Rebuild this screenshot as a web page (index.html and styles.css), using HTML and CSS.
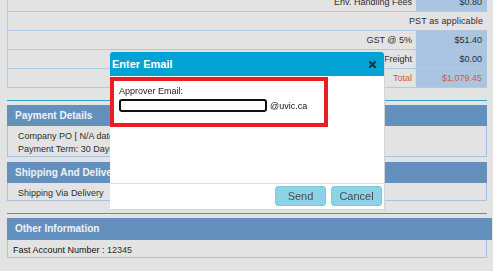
FILE: index.html
```html
<html>

<head>
    <meta charset="UTF-8">
    <meta name="viewport" content="width=device-width, initial-scale=1.0">
    <link rel="stylesheet" href="styles.css">
</head>

<body>
    <div class="page">
        <div class="totals">
            <div class="row"><div class="label">Env. Handling Fees</div><div class="value">$0.80</div></div>
            <div class="row"><div class="note">PST as applicable</div></div>
            <div class="row"><div class="label">GST @ 5%</div><div class="value">$51.40</div></div>
            <div class="row"><div class="label">Freight</div><div class="value">$0.00</div></div>
            <div class="row total"><div class="label">Total</div><div class="value">$1,079.45</div></div>
        </div>

        <div class="rule"></div>
        <div class="section">
            <h3>Payment Details</h3>
            <div class="section-body">
                <p>Company PO [ N/A dated N/A ]</p>
                <p>Payment Term: 30 Day(s)</p>
            </div>
        </div>
        <div class="section">
            <h3>Shipping And Delivery</h3>
            <div class="section-body">
                <p>Shipping Via Delivery</p>
            </div>
        </div>

        <div class="rule"></div>
        <div class="section">
            <h3 class="wide">Other Information</h3>
            <div class="section-body tight">
                <p><span class="key">Fast Account Number :</span> 12345</p>
            </div>
        </div>
    </div>

    <div class="modal">
        <div class="modal-head">
            <span class="modal-title">Enter Email</span>
            <svg class="close" width="7" height="7" viewBox="0 0 7 7">
                <path d="M1 1 L6 6 M6 1 L1 6" stroke="#2b2b2b" stroke-width="2" stroke-linecap="round"/>
            </svg>
        </div>
        <div class="modal-body">
            <div class="highlight">
                <div class="field-label">Approver Email:</div>
                <div class="field-row">
                    <input type="text" class="email-input" value="">
                    <span class="domain">@uvic.ca</span>
                </div>
            </div>
        </div>
        <div class="modal-foot">
            <button class="btn">Send</button>
            <button class="btn">Cancel</button>
        </div>
    </div>
</body>

</html>
```

FILE: styles.css
```css
* {
    box-sizing: border-box;
}
body {
    margin: 0;
    background: #e3e3e3;
    font-family: "Liberation Sans", Arial, sans-serif;
    font-size: 9px;
    color: #2e2e2e;
    overflow: hidden;
}
.page {
    margin: -7px 6px 0 7px;
}

/* totals table */
.totals {
    border-left: 1px solid #b3c9e3;
}
.row {
    display: flex;
    height: 19px;
    line-height: 18px;
    border-bottom: 1px solid #b3c9e3;
}
.label {
    flex: 1;
    text-align: right;
    padding-right: 3px;
}
.value {
    width: 72px;
    text-align: right;
    padding-right: 5px;
    background: #a9c5e2;
    border-left: 1px solid #d3dfec;
}
.note {
    flex: 1;
    text-align: right;
    padding-right: 4px;
    letter-spacing: 0.1px;
}
.total .label, .total .value {
    color: #d8593a;
}

/* sections */
.rule {
    height: 1px;
    margin-top: 12px;
    background: #2fa3cf;
}
.section {
    margin-top: 4px;
}
.section + .section {
    margin-top: 5px;
}
.section h3 {
    margin: 0;
    height: 21px;
    line-height: 21px;
    padding-left: 8px;
    background: #6490be;
    color: #eef2f7;
    font-size: 10px;
    font-weight: bold;
}
.section h3.wide {
    height: 22px;
    line-height: 22px;
    margin-right: -5px;
}
.section-body {
    border: 1px solid #a8c3e0;
    border-top: none;
    padding: 4px 0 0 10px;
}
.section-body.tight {
    padding-left: 5px;
}
.section-body p {
    margin: 0;
    line-height: 13px;
}
.key {
    color: #111;
}

/* dialog */
.modal {
    position: fixed;
    top: 52px;
    left: 110px;
    width: 274px;
    background: #fff;
    border-radius: 3px 3px 0 0;
    box-shadow: 1px 1px 0 #d4d4d4;
}
.modal-head {
    display: flex;
    align-items: center;
    justify-content: space-between;
    height: 24px;
    padding: 0 8px 0 2px;
    background: #02a3d4;
    border-radius: 3px 3px 0 0;
}
.modal-title {
    color: #fff;
    font-size: 11px;
    font-weight: bold;
}
.modal-body {
    height: 107px;
    padding-top: 1px;
}
.highlight {
    width: 218px;
    border: 4px solid #ec1c24;
    padding: 5px 5px 11px 5px;
}
.field-label {
    line-height: 11px;
    color: #222;
}
.field-row {
    display: flex;
    align-items: center;
    gap: 3px;
    margin-top: 2px;
}
.email-input {
    width: 148px;
    height: 13px;
    margin: 0;
    padding: 0;
    border: 2px solid #111;
    border-radius: 3px;
    background: #fff;
}
.domain {
    color: #111;
}
.modal-foot {
    display: flex;
    justify-content: flex-end;
    gap: 5px;
    padding: 2px 2px 3px 0;
    border-top: 1px solid #e2e2e2;
}
.btn {
    width: 51px;
    height: 20px;
    margin: 0;
    padding: 0;
    background: #8dd3e7;
    border: 1px solid #7fc7dc;
    border-radius: 3px;
    color: #4a4a4a;
    font-family: "Liberation Sans", Arial, sans-serif;
    font-size: 11px;
}
```
